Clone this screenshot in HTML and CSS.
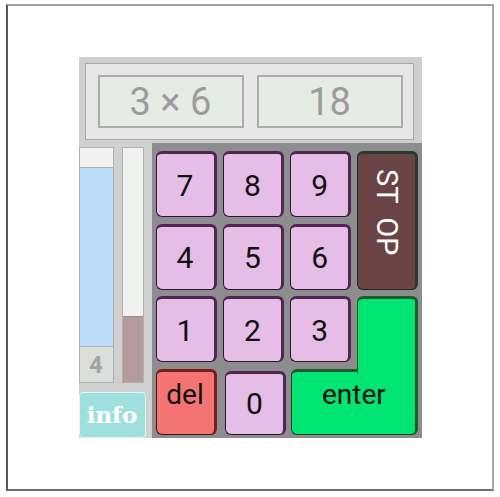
FILE: index.html
```html
<!DOCTYPE html>
<html lang="en">

<head>
    <meta charset="UTF-8">
    <meta name="viewport" content="width=device-width, initial-scale=1.0">
    <title>Calculator</title>
    <link rel="stylesheet" href="styles.css">
</head>

<body>
    <div class="frame">
        <div class="calc">
            <!-- display -->
            <div class="display">
                <div class="display-inner">
                    <div class="screen">3 × 6</div>
                    <div class="screen">18</div>
                </div>
            </div>

            <div class="main-row">
                <!-- side gauges -->
                <div class="side">
                    <div class="bars">
                        <div class="bar bar-level">
                            <div class="level-top"></div>
                            <div class="level-fill"></div>
                            <div class="level-num">4</div>
                        </div>
                        <div class="bar bar-time">
                            <div class="time-fill"></div>
                        </div>
                    </div>
                    <button class="info">info</button>
                </div>

                <!-- keys -->
                <div class="keypad">
                    <button class="key">7</button>
                    <button class="key">8</button>
                    <button class="key">9</button>
                    <button class="key stop"><span>ST OP</span></button>
                    <button class="key">4</button>
                    <button class="key">5</button>
                    <button class="key">6</button>
                    <button class="key">1</button>
                    <button class="key">2</button>
                    <button class="key">3</button>
                    <div class="enter-top"></div>
                    <button class="key del">del</button>
                    <button class="key zero">0</button>
                    <button class="enter">enter</button>
                </div>
            </div>
        </div>
    </div>
</body>

</html>
```

FILE: styles.css
```css
body {
    margin: 0;
    font-family: Roboto, "Liberation Sans", sans-serif;
    background: #fff;
}

.frame {
    box-sizing: border-box;
    width: 488px;
    height: 487px;
    margin: 4px 6px;
    padding-top: 51px;
    border: 2px solid;
    border-color: #a0a0a0 #a8a8a8 #6e6e6e #555;
}

.calc {
    width: 343px;
    margin: 0 auto;
}

.display {
    box-sizing: border-box;
    height: 86px;
    padding: 6px 8px 3px 6px;
    background: #cfcfcf;
}

.display-inner {
    box-sizing: border-box;
    height: 100%;
    display: flex;
    gap: 13px;
    padding: 11px 10px 11px 12px;
    border: 1px solid #a9a9a9;
    background: #e7e7e7;
}

.screen {
    flex: 1;
    display: flex;
    align-items: center;
    justify-content: center;
    border: 2px solid #acacac;
    background: #e6ebe6;
    color: #9c9c9c;
    font-size: 38px;
}

.main-row {
    display: flex;
    height: 295px;
}

.side {
    box-sizing: border-box;
    width: 73px;
    padding-top: 4px;
    background: #d0d0d0;
}

.bars {
    display: flex;
    gap: 8px;
    height: 236px;
}

.bar {
    box-sizing: border-box;
    display: flex;
    flex-direction: column;
    border: 1px solid #b0b0b0;
    background: #f0f2f0;
}

.bar-level {
    width: 35px;
}

.level-top {
    height: 19px;
}

.level-fill {
    flex: 1;
    background: #bcdcfc;
    border-top: 1px solid #b0b0b0;
    border-bottom: 1px solid #b0b0b0;
}

.level-num {
    height: 35px;
    display: flex;
    align-items: center;
    justify-content: center;
    background: #dcdedc;
    color: #a3a3a3;
    font-size: 24px;
    font-weight: bold;
}

.bar-time {
    width: 22px;
    justify-content: flex-end;
}

.time-fill {
    height: 65px;
    background: #b49b9b;
    border-top: 1px solid #a08a8a;
}

.info {
    box-sizing: border-box;
    display: block;
    width: 67px;
    height: 46px;
    margin-top: 9px;
    padding: 0 0 2px;
    border: 1px solid #e4f6f6;
    border-radius: 4px;
    background: #9fe0de;
    color: #fff;
    font-family: "DejaVu Serif", serif;
    font-weight: bold;
    font-size: 23px;
}

.keypad {
    flex: 1;
    display: grid;
    grid-template-columns: repeat(4, 61px);
    grid-template-rows: repeat(4, 66px);
    column-gap: 6.33px;
    row-gap: 6.67px;
    padding: 8px 3px 2px 4px;
    background: #8d8d90;
}

.key {
    box-sizing: border-box;
    display: flex;
    align-items: center;
    justify-content: center;
    padding: 0;
    border: 1px solid #2c1a2c;
    border-top: 3px solid #512651;
    border-right: 3px solid #512651;
    border-radius: 6px;
    background: #e6bde6;
    color: #111;
    font-family: Roboto, "Liberation Sans", sans-serif;
    font-size: 30px;
}

.stop {
    grid-column: 4;
    grid-row: 1 / 3;
    align-items: flex-start;
    padding-top: 15px;
    border-color: #1e2a20;
    border-top-color: #2a3a2c;
    border-right-color: #2a3a2c;
    background: #6a4444;
    color: #fff;
    font-size: 29px;
}

.stop span {
    writing-mode: vertical-rl;
    word-spacing: 7px;
}

.del {
    align-items: flex-start;
    padding-top: 6px;
    border-color: #3a1414;
    border-top-color: #7a1c1c;
    border-right-color: #7a1c1c;
    background: #f47474;
    font-size: 28px;
}

.zero {
    margin: 2px -2px 0 2px;
}

.enter-top {
    grid-column: 4;
    grid-row: 3;
    position: relative;
    z-index: 1;
    margin-bottom: -12px;
    border: 3px solid #1c5a30;
    border-left-width: 1px;
    border-bottom: none;
    border-radius: 6px 6px 0 0;
    background: #00e472;
}

.enter {
    grid-column: 3 / 5;
    grid-row: 4;
    margin-left: 1px;
    padding: 6px 0 0;
    display: flex;
    justify-content: center;
    align-items: flex-start;
    border: 1px solid #14401f;
    border-top: 3px solid #1c5a30;
    border-right: 3px solid #1c5a30;
    border-radius: 6px;
    background: #00e472;
    color: #111;
    font-family: Roboto, "Liberation Sans", sans-serif;
    font-size: 28px;
}
```
